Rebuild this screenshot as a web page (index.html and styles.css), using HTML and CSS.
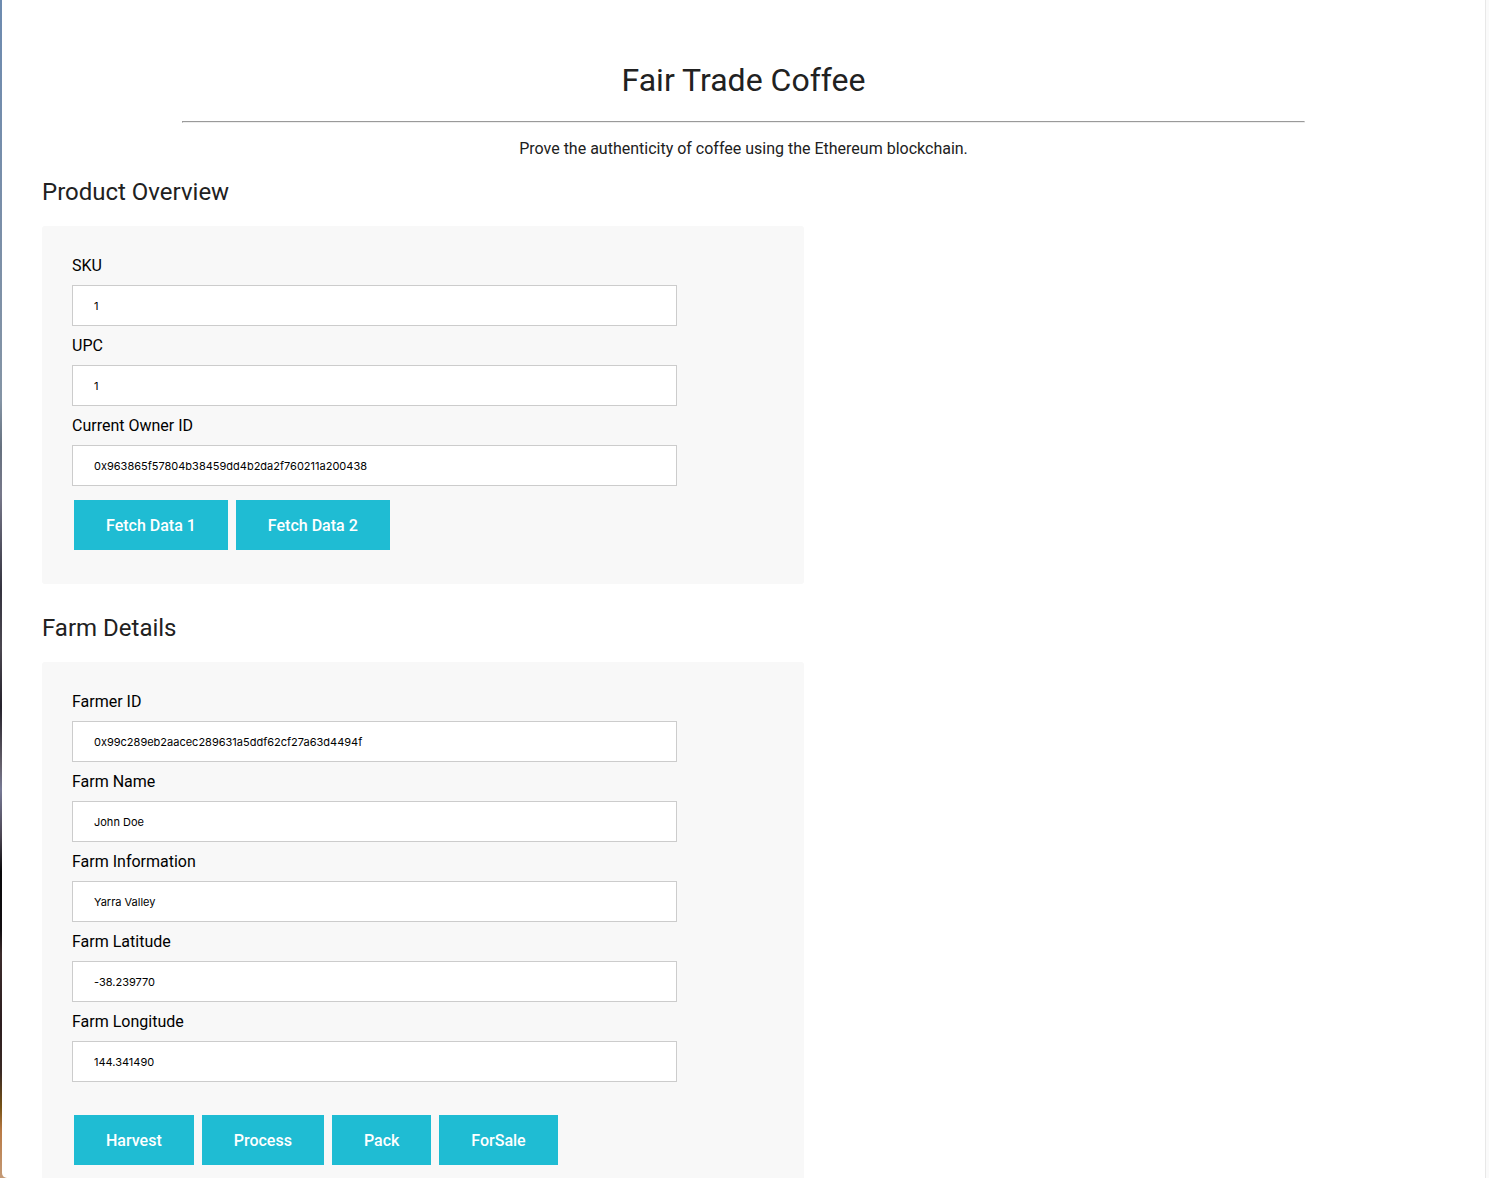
FILE: index.html
```html
<!DOCTYPE html>
<html lang="en">
<head>
  <meta charset="utf-8">
  <title>Fair Trade Coffee</title>
  <link rel="stylesheet" href="styles.css">
</head>
<body>
  <div class="shell">
    <main class="page">
      <header class="intro">
        <h1 class="title">Fair Trade Coffee</h1>
        <hr class="rule">
        <p class="tagline">Prove the authenticity of coffee using the Ethereum blockchain.</p>
      </header>

      <section class="section">
        <h2 class="heading">Product Overview</h2>
        <form class="card">
          <label class="label" for="sku">SKU</label>
          <input class="field" type="text" id="sku" value="1">
          <label class="label" for="upc">UPC</label>
          <input class="field" type="text" id="upc" value="1">
          <label class="label" for="ownerID">Current Owner ID</label>
          <input class="field" type="text" id="ownerID" value="0x963865f57804b38459dd4b2da2f760211a200438">
          <div class="actions">
            <button class="button" type="button">Fetch Data 1</button>
            <button class="button" type="button">Fetch Data 2</button>
          </div>
        </form>
      </section>

      <section class="section">
        <h2 class="heading">Farm Details</h2>
        <form class="card">
          <label class="label" for="farmerID">Farmer ID</label>
          <input class="field" type="text" id="farmerID" value="0x99c289eb2aacec289631a5ddf62cf27a63d4494f">
          <label class="label" for="farmName">Farm Name</label>
          <input class="field" type="text" id="farmName" value="John Doe">
          <label class="label" for="farmInfo">Farm Information</label>
          <input class="field" type="text" id="farmInfo" value="Yarra Valley">
          <label class="label" for="latitude">Farm Latitude</label>
          <input class="field" type="text" id="latitude" value="-38.239770">
          <label class="label" for="longitude">Farm Longitude</label>
          <input class="field" type="text" id="longitude" value="144.341490">
          <div class="actions actions-spaced">
            <button class="button" type="button">Harvest</button>
            <button class="button" type="button">Process</button>
            <button class="button" type="button">Pack</button>
            <button class="button" type="button">ForSale</button>
          </div>
        </form>
      </section>
    </main>
  </div>
</body>
</html>
```

FILE: styles.css
```css
* {
  box-sizing: border-box;
}

body {
  margin: 0;
  background: #fff;
  color: #000;
  font: 16px/20px Roboto, sans-serif;
}

/* Desktop edge on the left, scroll track on the right */
.shell {
  height: 100vh;
  padding: 0 3px 0 2px;
  overflow: hidden;
  background:
    linear-gradient(#fafafa, #fafafa) right / 3px 100% no-repeat,
    linear-gradient(#6d8bb0 0, #7b8fa8 20%, #8494a5 34%, #66717f 38%, #77788a 42%,
      #34333f 50%, #4b4750 55%, #25222c 60%, #66616c 65%, #777a96 67%, #4b4552 71%,
      #08080a 74%, #120e11 79%, #3c2c2c 81%, #2c1d1f 87%, #3a2a25 91%, #775316 94%,
      #b97a45 96%, #c49a76 100%);
}

.page {
  height: 100%;
  padding: 60px 40px 0;
  overflow: hidden;
  background: #fff;
  border-right: 1px solid #e8e8e8;
  border-bottom-left-radius: 5px;
}

.intro {
  margin-bottom: 19px;
  text-align: center;
}

.title {
  margin: 0 0 21px;
  color: #212121;
  font-size: 32px;
  font-weight: 400;
  line-height: 40px;
}

.rule {
  width: 80%;
  margin: 0 auto 16px;
}

.tagline {
  margin: 0;
  color: #212121;
}

.section {
  margin-bottom: 30px;
}

.heading {
  margin: 0 0 20px;
  color: #212121;
  font-size: 24px;
  font-weight: 400;
  line-height: 28px;
}

.card {
  width: 54.3%;
  padding: 20px 30px 34px;
  background: #f8f8f8;
  border-radius: 3px;
}

.label {
  display: block;
  line-height: 39px;
}

.field {
  display: block;
  width: 86.2%;
  height: 41px;
  padding: 0 21px;
  border: 1px solid #ccc;
  border-radius: 0;
  background: #fff;
  color: #000;
  font: 11px Inter, sans-serif;
}

.actions {
  display: flex;
  gap: 8px;
  margin-top: 14px;
  padding-left: 2px;
}

.actions-spaced {
  margin-top: 33px;
}

.button {
  height: 50px;
  padding: 2px 32px 0;
  border: 0;
  background: #1fbcd3;
  color: #fff;
  font: 500 16px/20px Roboto, sans-serif;
}
```
